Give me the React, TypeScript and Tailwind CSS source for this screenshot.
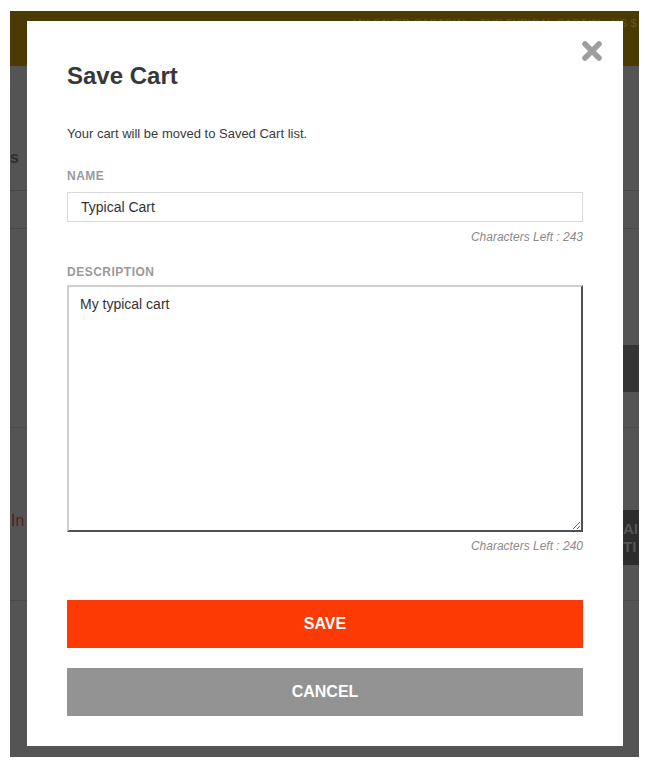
import React from "react";

const font = { fontFamily: '"Liberation Sans", Arial, sans-serif' };

function CloseIcon() {
  return (
    <svg width="22" height="22" viewBox="0 0 22 22" aria-hidden="true">
      <path d="M4 4 L18 18 M18 4 L4 18" stroke="#9e9e9e" strokeWidth="5.5" strokeLinecap="round" />
    </svg>
  );
}

export default function App() {
  return (
    <div className="min-h-[765px] bg-white pl-[10px] pt-[11px]" style={font}>
      <div className="relative flex h-[746px] w-[629px] flex-col overflow-hidden bg-[#545454]">
        {/* background page (dimmed) */}
        <div className="flex h-[55px] justify-end overflow-hidden bg-[#4b3a03] pr-[2px] pt-[4px]">
          <span className="whitespace-nowrap text-[11px] tracking-wide text-[#66552a]">
            MY SAVED CARTS(1) &nbsp;&nbsp; THE TYPICAL CART(0) &nbsp; US $
          </span>
        </div>
        <div className="flex h-[124px] justify-between">
          <div className="w-[17px] pt-[82px] text-[16px] font-bold leading-[20px] text-[#2e2e2e]">s</div>
          <div className="w-[16px]" />
        </div>
        <div className="h-px bg-[#484848]" />
        <div className="h-[37px]" />
        <div className="h-px bg-[#484848]" />
        <div className="h-[116px]" />
        <div className="flex h-[47px] justify-end">
          <div className="w-[16px] bg-[#343434]" />
        </div>
        <div className="h-[35px]" />
        <div className="h-px bg-[#4b4b4b]" />
        <div className="h-[82px]" />
        <div className="flex h-[55px] justify-between">
          <div className="w-[17px] pl-[1px] text-[16px] leading-[22px] text-[#5e1c1c]">In</div>
          <div className="flex w-[16px] flex-col bg-[#2c2c2c] pt-[10px] text-[15px] font-bold leading-[18px] text-[#555555]">
            <span>AI</span>
            <span>TI</span>
          </div>
        </div>
        <div className="h-[35px]" />
        <div className="h-px bg-[#4a4a4a]" />
        <div className="flex-1" />

        {/* modal */}
        <div className="absolute left-[17px] top-[10px] flex h-[725px] w-[596px] flex-col bg-white px-[40px] pb-[30px] pt-[41px]">
          <button className="absolute right-[20px] top-[19px]" aria-label="Close">
            <CloseIcon />
          </button>
          <h2 className="h-[28px] text-[24px] font-bold leading-[28px] text-[#383838]">Save Cart</h2>
          <p className="mt-[35px] text-[13px] leading-[18px] text-[#3a3a3a]">
            Your cart will be moved to Saved Cart list.
          </p>
          <label className="mt-[25px] text-[12px] font-bold leading-[16px] tracking-[0.5px] text-[#9a9a9a]">NAME</label>
          <input
            className="mt-[8px] h-[30px] w-full border border-[#d9d9d9] pl-[13px] text-[14px] text-[#333333] outline-none"
            style={font}
            defaultValue="Typical Cart"
          />
          <div className="mt-[7px] text-right text-[12px] italic leading-[16px] text-[#8a8a8a]">Characters Left : 243</div>
          <label className="mt-[19px] text-[12px] font-bold leading-[16px] tracking-[0.5px] text-[#9a9a9a]">DESCRIPTION</label>
          <textarea
            className="mt-[5px] h-[247px] w-full border-2 border-b-[#505050] border-l-[#cfcfcf] border-r-[#505050] border-t-[#cfcfcf] px-[11px] py-[7px] text-[14px] leading-[20px] text-[#333333] outline-none"
            style={font}
            defaultValue="My typical cart"
          />
          <div className="mt-[6px] text-right text-[12px] italic leading-[16px] text-[#8a8a8a]">Characters Left : 240</div>
          <button className="mt-[46px] flex h-[48px] w-full items-center justify-center bg-[#fd3a03] text-[16px] font-bold text-white">
            SAVE
          </button>
          <button className="mt-[20px] flex h-[48px] w-full items-center justify-center bg-[#939393] text-[16px] font-bold text-white">
            CANCEL
          </button>
        </div>
      </div>
    </div>
  );
}
